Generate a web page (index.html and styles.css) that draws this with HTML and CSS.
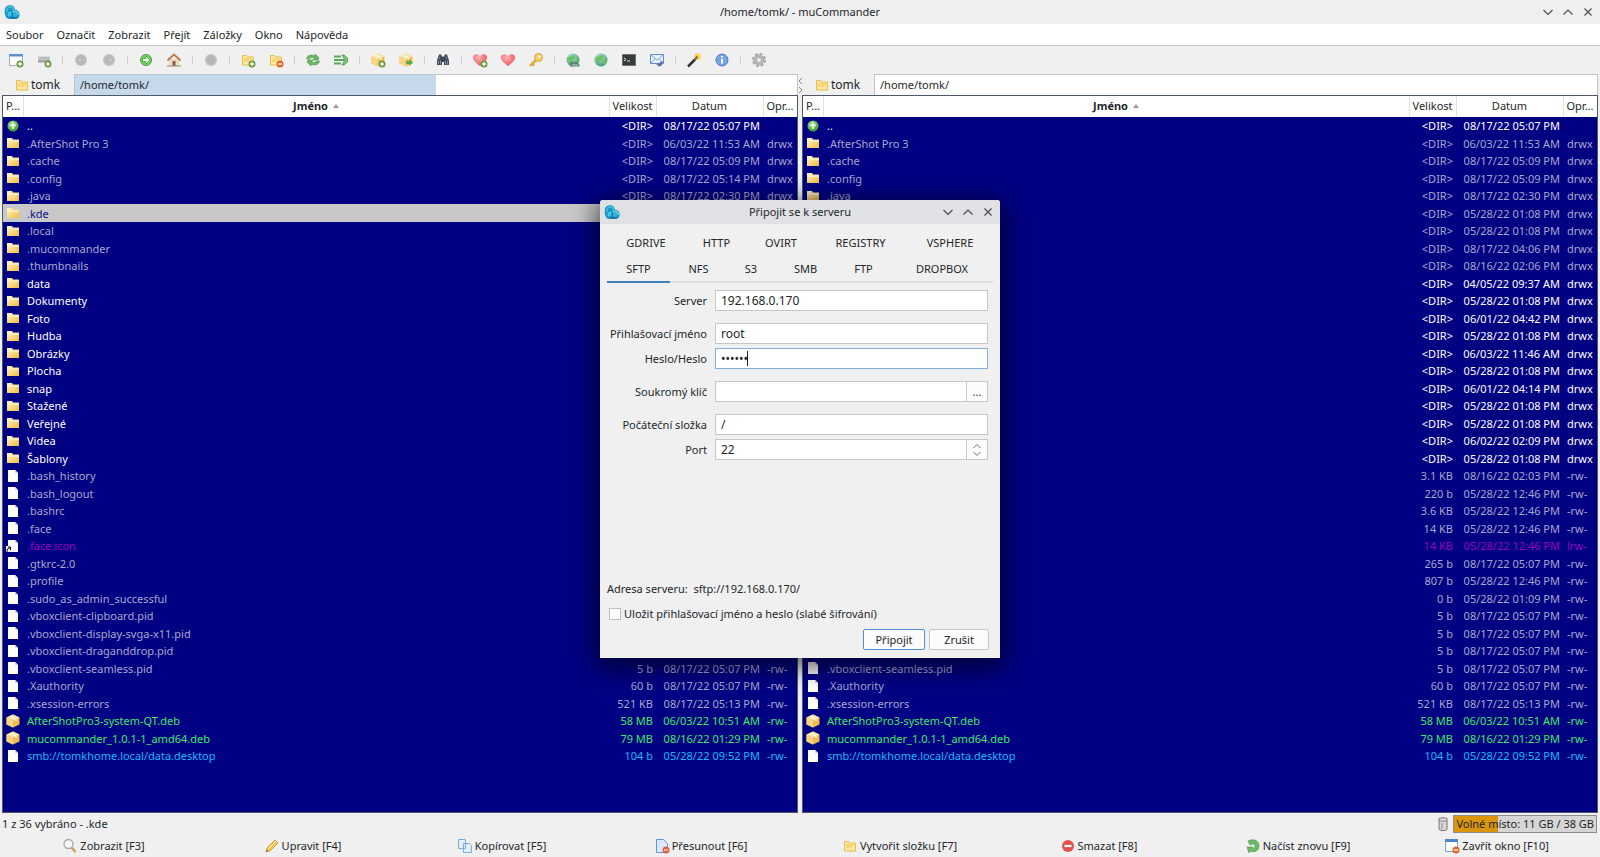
FILE: index.html
```html
<!DOCTYPE html>
<html lang="cs">
<head>
<meta charset="utf-8">
<title>/home/tomk/ - muCommander</title>
<link rel="stylesheet" href="styles.css">
</head>
<body>
<svg class="sprite" aria-hidden="true">
  <defs>
    <linearGradient id="g-folder" x1="0" y1="0" x2="1" y2="1"><stop offset="0" stop-color="#fff6cc"/><stop offset="1" stop-color="#f2bd3e"/></linearGradient>
    <radialGradient id="g-green" cx=".4" cy=".3" r=".7"><stop offset="0" stop-color="#a6e888"/><stop offset="1" stop-color="#3a9c34"/></radialGradient>
    <radialGradient id="g-grey" cx=".5" cy=".5" r=".6"><stop offset="0" stop-color="#a8a8a8"/><stop offset="1" stop-color="#c8c8c8"/></radialGradient>
    <radialGradient id="g-heart" cx=".4" cy=".3" r=".7"><stop offset="0" stop-color="#ffb3b3"/><stop offset="1" stop-color="#e85560"/></radialGradient>
    <radialGradient id="g-globe" cx=".4" cy=".3" r=".7"><stop offset="0" stop-color="#b4e8d0"/><stop offset="1" stop-color="#3a9c7c"/></radialGradient>
  </defs>
  <symbol id="plus" viewBox="0 0 16 16"><circle cx="12" cy="12" r="3.500" fill="#6a9c3c"/><path d="M10 12h4M12 10v4" stroke="#fff" stroke-width="1.300"/></symbol>
  <symbol id="minus" viewBox="0 0 16 16"><circle cx="12" cy="12" r="3.500" fill="#e06a28"/><path d="M10 12h4" stroke="#fff" stroke-width="1.300"/></symbol>
  <symbol id="app" viewBox="0 0 16 16"><path d="M2 13C0 9 0 3 4 1.500c3-1 7 0 7 4.500 3 0 5 2 4.500 5.500-.5 3.500-3.500 3.500-5.500 3.500-3-1-6 1-8-2z" fill="#1a94c4"/><path d="M2.500 8c0-3 2-6 5-5 2 .5 2 2 2 4" stroke="#48c0e4" stroke-width="1.500" fill="none"/><path d="M9 8c3-1.500 5 0 5 3" stroke="#6cdcf6" stroke-width="1.500" fill="none"/><circle cx="6" cy="10" r="2.600" fill="#3cc4ea"/><circle cx="11" cy="11" r="2" fill="#34b4e0"/><path d="M5 14h8M8 9v4" stroke="#0a6490"/></symbol>
  <symbol id="window-new" viewBox="0 0 16 16"><path d="M1.500 2.500h13v11h-13z" fill="#fff" stroke="#9cb0c8"/><path d="M1 2h14v2.500H1z" fill="#5b8fd0"/><use href="#plus"/></symbol>
  <symbol id="drive-new" viewBox="0 0 16 16"><path d="M2 4.500h12v6H2z" fill="#c4c4c4"/><path d="M2 8h12v2.500H2z" fill="#a4a4a4"/><path d="M4 6h8" stroke="#b0b0b0"/><use href="#plus"/></symbol>
  <symbol id="back" viewBox="0 0 16 16"><circle cx="8" cy="8" r="6" fill="url(#g-grey)"/><path d="M8.500 5l-3 3 3 3M6 8h5" stroke="#cfcfcf" fill="none"/></symbol>
  <symbol id="forward" viewBox="0 0 16 16"><circle cx="8" cy="8" r="6" fill="url(#g-grey)"/><path d="M7.500 5l3 3-3 3M5 8h5" stroke="#cfcfcf" fill="none"/></symbol>
  <symbol id="go" viewBox="0 0 16 16"><circle cx="8" cy="8" r="5.500" fill="#7ccf68" stroke="#48a43c"/><path d="M8 4l4 4-4 4V9.500H4.500v-3H8z" fill="#effbe8" stroke="#3c9434" stroke-width=".7"/></symbol>
  <symbol id="parent" viewBox="0 0 16 16"><circle cx="8" cy="8" r="5.500" fill="url(#g-green)"/><path d="M8 11V5M5.500 8L8 5.500 10.500 8" stroke="#fff" stroke-width="1.500" fill="none"/></symbol>
  <symbol id="home" viewBox="0 0 16 16"><path d="M3 7h10v7H3z" fill="#ecdcc4"/><path d="M1.500 8.500L8 2.500l6.500 6" stroke="#bc7c50" stroke-width="2" fill="none"/><path d="M6.500 9h3v5h-3z" fill="#8c6048"/><path d="M1 14h14" stroke="#8c8c64"/></symbol>
  <symbol id="stop" viewBox="0 0 16 16"><circle cx="8" cy="8" r="6" fill="url(#g-grey)"/><path d="M6 6l4 4M10 6l-4 4" stroke="#bcbcbc"/></symbol>
  <symbol id="folder-y" viewBox="0 0 16 16"><path d="M2.500 3.500h4l1 1.500h6v8h-11z" fill="#ffe9a0" stroke="#e8bc50"/><path d="M4 7h8M4 9h6" stroke="#edc458"/></symbol>
  <symbol id="folder-add" viewBox="0 0 16 16"><use href="#folder-y"/><use href="#plus"/></symbol>
  <symbol id="folder-del" viewBox="0 0 16 16"><use href="#folder-y"/><use href="#minus"/></symbol>
  <symbol id="swap" viewBox="0 0 16 16"><path d="M1.500 7C2 3.500 6 2 10 4V2l4 4-1 2H8l1.500-1.500C7 5 5 5.500 4.500 7zM14.500 9c-.5 3.500-4.500 5-8.500 3v2l-4-4 1-2h5L6.500 9.500c2.500 1.500 4.500 1 5-.5z" fill="#6ab866" stroke="#4a964c" stroke-width=".6"/></symbol>
  <symbol id="same" viewBox="0 0 16 16"><path d="M1 4.500h7M1 8h10M1 11.500h7" stroke="#58a85a" stroke-width="2"/><path d="M9 3h2l3.500 3v4L11 13H9l3-5z" fill="#7cc278" stroke="#46924c" stroke-width=".8"/></symbol>
  <symbol id="box" viewBox="0 0 16 16"><path d="M8 1.500l6.500 3v7l-6.500 3-6.500-3v-7z" fill="#f3bd52"/><path d="M8 1.500l6.500 3-6.500 3-6.500-3z" fill="#fbe6ae"/><path d="M8 7.500v7l-6.500-3v-7z" fill="#f8d488"/><path d="M5 3l6 3v2" stroke="#fff" fill="none"/></symbol>
  <symbol id="pack" viewBox="0 0 16 16"><use href="#box"/><use href="#plus"/></symbol>
  <symbol id="unpack" viewBox="0 0 16 16"><use href="#box"/><path d="M8 9h3V7l4 3.500-4 3.500v-2H8z" fill="#60a84c"/></symbol>
  <symbol id="find" viewBox="0 0 16 16"><path d="M4 2.500h2.500v2h3v-2H12l2 6V13H9v-3H7v3H2V8.500z" fill="#3c4654"/><path d="M3.500 8.500v4M5.500 8.500v4M10.500 8.500v4M12.500 8.500v4M4.500 5v2M11.500 5v2" stroke="#8c9cac" stroke-width=".9"/></symbol>
  <symbol id="heart" viewBox="0 0 16 16"><path d="M8 14C4 11 1 8.500 1 5.500 1 2 6 1 8 4.500 10 1 15 2 15 5.500 15 8.500 12 11 8 14z" fill="url(#g-heart)"/></symbol>
  <symbol id="heart-add" viewBox="0 0 16 16"><use href="#heart"/><use href="#plus"/></symbol>
  <symbol id="key" viewBox="0 0 16 16"><path d="M8.500 7.500L2 14M4 11.500l2 2" stroke="#e2a642" stroke-width="2.500"/><circle cx="10.500" cy="5.500" r="4" fill="#f7cd66" stroke="#dda440"/><circle cx="11.500" cy="4.500" r="1.200" fill="#fff"/></symbol>
  <symbol id="globe" viewBox="0 0 16 16"><circle cx="8" cy="8" r="6.500" fill="url(#g-globe)"/><path d="M3 6c2-3 4 0 4-3l3 1-1 4-3 1-1 3zM10 9l3-2 1 3-3 3z" fill="#6cc05c"/></symbol>
  <symbol id="globe-link" viewBox="0 0 16 16"><use href="#globe"/><path d="M5 14.500V11l2-2 2 2 2-2 3.500 3.500v2z" fill="#5c8478"/><path d="M7 13h6" stroke="#b4d4c4"/></symbol>
  <symbol id="terminal" viewBox="0 0 16 16"><path d="M1.500 2.500h13v11h-13z" fill="#363b3b" stroke="#6c7070"/><path d="M3 6l2 1.500L3 9M6 9h3" stroke="#e4e4e4" fill="none"/></symbol>
  <symbol id="mail" viewBox="0 0 16 16"><path d="M1.500 2.500h13v9h-13z" fill="#e8f1fc" stroke="#5b8fdb"/><path d="M2 3l6 5 6-5M2 11l4-4M14 11l-4-4" stroke="#7da8e2" fill="none"/><path d="M7 12l3 2.500c2 0 4-2 4-5h-2l-2.500 2z" fill="#62799a"/></symbol>
  <symbol id="wand" viewBox="0 0 16 16"><circle cx="11.500" cy="4.500" r="3.500" fill="#fbd468"/><path d="M2 14.500l7-7" stroke="#333" stroke-width="2.500"/><path d="M8.500 8l3-3.500" stroke="#7c6838" stroke-width="2"/></symbol>
  <symbol id="info" viewBox="0 0 16 16"><circle cx="8" cy="8" r="6" fill="#76a9df" stroke="#4778b8"/><path d="M8 7v4.500M8 4v1.500" stroke="#fff" stroke-width="2"/></symbol>
  <symbol id="gear" viewBox="0 0 16 16"><circle cx="8" cy="8" r="6" fill="none" stroke="#a0a0a0" stroke-width="2" stroke-dasharray="2.700 2"/><circle cx="8" cy="8" r="3.700" fill="none" stroke="#b4b4b4" stroke-width="3.600"/></symbol>
  <symbol id="folder" viewBox="0 0 16 16"><path d="M2 3h5l1 1.500h6V13H2z" fill="url(#g-folder)"/><path d="M2 6h12" stroke="#fff8dc"/></symbol>
  <symbol id="file" viewBox="0 0 16 16"><path d="M3 2h7l3 3v9H3z" fill="#fff"/><path d="M10 2v3h3" fill="#d4d8e4"/></symbol>
  <symbol id="file-link" viewBox="0 0 16 16"><use href="#file"/><path d="M1 8h5v6H1z" fill="#e8ecf0"/><path d="M2 14c0-3 1-4 3-4M3 9h2.500v3" stroke="#111" fill="none"/></symbol>
  <symbol id="magnifier" viewBox="0 0 16 16"><path d="M9.500 9.500l4 4.500" stroke="#d49a60" stroke-width="2.500"/><circle cx="6.500" cy="6" r="4.500" fill="#f4f6f8" stroke="#a8a8a8" stroke-width="1.300"/></symbol>
  <symbol id="pencil" viewBox="0 0 16 16"><path d="M2 14l1-4 8-8 3 3-8 8z" fill="#f5c656" stroke="#cf8f2c" stroke-width=".8"/><path d="M4 11l8-8" stroke="#fff2b8"/><path d="M2 14l1-2 1 1z" fill="#444"/></symbol>
  <symbol id="copy" viewBox="0 0 16 16"><path d="M1.500 1.500h7v9h-7zM6.500 5.500h6l2 2v7h-8z" fill="#e2effc" stroke="#7baee0"/></symbol>
  <symbol id="move" viewBox="0 0 16 16"><path d="M2.500 1.500h7l4 4v9h-11z" fill="#d9eafc" stroke="#5c98dc"/><circle cx="12" cy="12" r="3.500" fill="#dd6040"/><path d="M10 12h4" stroke="#fff"/></symbol>
  <symbol id="delete" viewBox="0 0 16 16"><circle cx="8" cy="8" r="6" fill="#e2524a"/><path d="M4.500 8h7" stroke="#fff" stroke-width="2.200"/></symbol>
  <symbol id="reload" viewBox="0 0 16 16"><path d="M3 3c6-3 11 0 11 5s-5 7-9 5l-1 2-2-6 6 0-1 2c2 0 3-1 3-3s-3-3-5-1z" fill="#6abc64" stroke="#43924a" stroke-width=".6"/></symbol>
  <symbol id="window-close" viewBox="0 0 16 16"><path d="M1.500 1.500h12v12h-12z" fill="#fff" stroke="#7aa4d8"/><path d="M1 1h13v3H1z" fill="#4c88d0"/><use href="#minus"/></symbol>
  <symbol id="trash" viewBox="0 0 16 16"><path d="M4 2.500c2-1 6-1 8 0v11c-2 1.500-6 1.500-8 0z" fill="#d8d8d8" stroke="#747474"/><path d="M4 4.500c2 1 6 1 8 0M7 7v6" stroke="#888" fill="none"/></symbol>
  <symbol id="win-min" viewBox="0 0 16 16"><path d="M3.500 6L8 10.500 12.500 6" stroke="#4a4e52" stroke-width="1.200" fill="none"/></symbol>
  <symbol id="win-max" viewBox="0 0 16 16"><path d="M3.500 10.500L8 6l4.500 4.500" stroke="#4a4e52" stroke-width="1.200" fill="none"/></symbol>
  <symbol id="win-x" viewBox="0 0 16 16"><path d="M4.500 4.500l7 7M11.500 4.500l-7 7" stroke="#4a4e52" stroke-width="1.200"/></symbol>
</svg>

<header class="titlebar">
  <svg class="icon"><use href="#app"/></svg>
  <h1 class="title">/home/tomk/ - muCommander</h1>
  <div class="window-buttons">
    <button aria-label="Minimalizovat"><svg class="icon"><use href="#win-min"/></svg></button>
    <button aria-label="Maximalizovat"><svg class="icon"><use href="#win-max"/></svg></button>
    <button aria-label="Zavřít"><svg class="icon"><use href="#win-x"/></svg></button>
  </div>
</header>
<nav class="menubar">
  <button>Soubor</button><button>Označit</button><button>Zobrazit</button><button>Přejít</button><button>Záložky</button><button>Okno</button><button>Nápověda</button>
</nav>
<div class="toolbar" role="toolbar" aria-label="Nástroje"></div>

<main class="workspace">
  <section class="panel">
    <div class="location">
      <button class="drive"><svg class="icon"><use href="#folder-y"/></svg>tomk</button>
      <input class="path loading" aria-label="Cesta vlevo" value="/home/tomk/">
    </div>
    <div class="listing" data-side="left"></div>
  </section>
  <div class="splitter"><svg viewBox="0 0 4 20"><path d="M4 4L1 7l3 3M1 13l3 3-3 3" fill="none" stroke="#888"/></svg></div>
  <section class="panel">
    <div class="location">
      <button class="drive"><svg class="icon"><use href="#folder-y"/></svg>tomk</button>
      <input class="path" aria-label="Cesta vpravo" value="/home/tomk/">
    </div>
    <div class="listing" data-side="right"></div>
  </section>
</main>

<div class="statusbar">
  <span>1 z 36 vybráno - .kde</span>
  <svg class="icon"><use href="#trash"/></svg>
  <span class="volume">Volné místo: 11 GB / 38 GB</span>
</div>
<footer class="commands">
  <button><svg class="icon"><use href="#magnifier"/></svg>Zobrazit [F3]</button>
  <button><svg class="icon"><use href="#pencil"/></svg>Upravit [F4]</button>
  <button><svg class="icon"><use href="#copy"/></svg>Kopírovat [F5]</button>
  <button><svg class="icon"><use href="#move"/></svg>Přesunout [F6]</button>
  <button><svg class="icon"><use href="#folder-y"/></svg>Vytvořit složku [F7]</button>
  <button><svg class="icon"><use href="#delete"/></svg>Smazat [F8]</button>
  <button><svg class="icon"><use href="#reload"/></svg>Načíst znovu [F9]</button>
  <button><svg class="icon"><use href="#window-close"/></svg>Zavřít okno [F10]</button>
</footer>

<div class="dialog" role="dialog" aria-labelledby="dialog-title">
  <div class="titlebar dialog-titlebar">
    <svg class="icon"><use href="#app"/></svg>
    <h2 class="title" id="dialog-title">Připojit se k serveru</h2>
    <div class="window-buttons">
      <button aria-label="Minimalizovat"><svg class="icon"><use href="#win-min"/></svg></button>
      <button aria-label="Maximalizovat"><svg class="icon"><use href="#win-max"/></svg></button>
      <button aria-label="Zavřít"><svg class="icon"><use href="#win-x"/></svg></button>
    </div>
  </div>
  <form class="dialog-body">
    <div class="tabs" role="tablist">
      <div class="tab-row upper">
        <button type="button" role="tab">GDRIVE</button><button type="button" role="tab">HTTP</button><button type="button" role="tab">OVIRT</button><button type="button" role="tab">REGISTRY</button><button type="button" role="tab">VSPHERE</button>
      </div>
      <div class="tab-row lower">
        <button type="button" role="tab" aria-selected="true">SFTP</button><button type="button" role="tab">NFS</button><button type="button" role="tab">S3</button><button type="button" role="tab">SMB</button><button type="button" role="tab">FTP</button><button type="button" role="tab">DROPBOX</button>
      </div>
    </div>
    <div class="fields">
      <div class="field spaced"><label for="server">Server</label><input id="server" value="192.168.0.170"></div>
      <div class="field"><label for="login">Přihlašovací jméno</label><input id="login" value="root"></div>
      <div class="field spaced"><label for="password">Heslo/Heslo</label><div class="focused"><input id="password" type="password" value="secret"></div></div>
      <div class="field spaced"><label for="key-file">Soukromý klíč</label><div class="joined"><input id="key-file"><button type="button" aria-label="Vybrat soubor">...</button></div></div>
      <div class="field"><label for="start-folder">Počáteční složka</label><input id="start-folder" value="/"></div>
      <div class="field"><label for="port">Port</label><div class="joined"><input id="port" inputmode="numeric" value="22"><button type="button" aria-label="Změnit port"><svg class="icon" viewBox="0 0 16 16"><path d="M4.500 6L8 2.500 11.500 6M4.500 10L8 13.500 11.500 10" fill="none" stroke="#777"/></svg></button></div></div>
    </div>
    <p class="address">Adresa serveru:&nbsp; <output>sftp://192.168.0.170/</output></p>
    <label class="remember"><input type="checkbox">Uložit přihlašovací jméno a heslo (slabé šifrování)</label>
    <div class="actions"><button class="primary">Připojit</button><button type="button">Zrušit</button></div>
  </form>
</div>
<script src="app.js"></script>
</body>
</html>
```

FILE: styles.css
```css
* { box-sizing: border-box; }

body {
  margin: 0;
  min-height: 100vh;
  display: flex;
  flex-direction: column;
  position: relative;
  background: #f0f0f0;
  color: #232629;
  font: 11px/16px "Noto Sans", "Open Sans", sans-serif;
}

button, input { font: inherit; color: inherit; }
button { background: none; border: 0; padding: 0; }
.sprite { position: absolute; width: 0; height: 0; }
.icon { width: 16px; height: 16px; flex: none; display: block; }

.titlebar {
  height: 24px;
  display: grid;
  grid-template-columns: 60px 1fr 60px;
  align-items: center;
  padding: 0 4px;
  background: #efefef;
}
.title { margin: 0; font-size: 11px; font-weight: 400; text-align: center; }
.window-buttons { display: flex; justify-content: flex-end; gap: 4px; }

.menubar {
  height: 22px;
  display: flex;
  gap: 13px;
  padding: 0 6px;
  background: #fff;
  border-bottom: 1px solid #c4c4c4;
}

.toolbar { height: 28px; display: flex; align-items: center; padding: 0 2px; }
.toolbar button { width: 28px; display: flex; justify-content: center; }
.toolbar .sep { width: 1px; height: 8px; margin: 0 4px; background: #cdd0d2; }

.workspace {
  flex: 1;
  display: grid;
  grid-template-columns: minmax(0, 1fr) 4px minmax(0, 1fr);
  padding: 0 2px;
}
.splitter svg { width: 4px; height: 20px; display: block; }
.panel { display: flex; flex-direction: column; }
.location { height: 21px; display: flex; }
.drive { width: 72px; padding-right: 2px; display: flex; align-items: center; justify-content: center; gap: 1px; font-size: 12px; }
.path {
  flex: 1;
  min-width: 0;
  padding: 0 5px;
  border: 1px solid #c0c4c8;
  border-width: 1px 1px 0;
  background: #fff;
  outline: none;
}
.loading { background: linear-gradient(to right, #c6d9ea 50%, #fff 50%); }

.listing {
  flex: 1;
  background: #000083;
  border: 1px solid #4c5868;
}
.files { width: 100%; table-layout: fixed; border-collapse: collapse; }
.files th {
  height: 21px;
  padding: 0 3px 1px;
  background: #fff;
  border-right: 1px solid #e2e2e2;
  font-weight: 400;
  white-space: nowrap;
}
.files th:last-child { border-right: 0; }
.files th.sorted { font-weight: 700; }
.files th.sorted::after {
  content: "";
  display: inline-block;
  margin: 0 0 2px 5px;
  border: 3px solid transparent;
  border-top: 0;
  border-bottom: 4px solid #999;
}
.col-icon { width: 20px; }
.col-size { width: 47px; }
.col-date { width: 107px; }
.col-perm { width: 34px; }
.files td { padding: 0 3px; line-height: 17px; height: 17px; white-space: nowrap; text-align: right; }
.files tr:nth-child(even) td { height: 18px; }
.files td:first-child { padding: 0 2px; }
.files td:nth-child(2), .files td:last-child { text-align: left; padding-left: 4px; }
.files th:first-child, .files th:last-child { text-align: left; }
.plain { color: #fff; }
.hidden { color: #a8a8cc; }
.link { color: #9c00bc; }
.archive { color: #3ce868; }
.remote { color: #10bcf8; }
.selected { background: #c8c8c8; color: #10108c; }

.statusbar {
  height: 22px;
  display: flex;
  align-items: center;
  gap: 2px;
  padding: 0 3px 0 2px;
}
.statusbar .icon { margin-left: auto; }
.volume {
  padding: 0 2px;
  border: 1px solid #8c8c8c;
  background: linear-gradient(to right, #d9960c 31%, #d6d6d6 31%);
}
.commands { height: 22px; display: grid; grid-template-columns: repeat(8, 1fr); padding: 0 4px; }
.commands button { display: flex; align-items: center; justify-content: center; gap: 2px; }

.dialog {
  position: absolute;
  top: 200px;
  left: 50%;
  width: 400px;
  margin-left: -200px;
  display: flex;
  flex-direction: column;
  background: #f0f0f0;
  border-radius: 3px 3px 0 0;
  box-shadow: 0 5px 24px 4px rgba(0, 0, 10, .65);
}
.dialog-titlebar { background: #dfe1e4; border-radius: 3px 3px 0 0; }
.dialog-body { padding: 7px 7px 8px; display: flex; flex-direction: column; }
.tab-row { display: grid; }
.tab-row button { height: 26px; border-bottom: 2px solid transparent; }
.upper { grid-template-columns: 78fr 63fr 66fr 93fr 86fr; }
.lower { grid-template-columns: 63fr 57fr 48fr 61fr 55fr 102fr; }
.lower button { border-bottom-color: #dcdee0; }
.lower button[aria-selected] { border-bottom-color: #4080bc; }
.fields { padding: 7px 5px 0 0; display: flex; flex-direction: column; gap: 4px; }
.field { display: grid; grid-template-columns: 100px 1fr; column-gap: 8px; align-items: center; }
.spaced { margin-bottom: 8px; }
.field label { text-align: right; white-space: nowrap; }
.field input {
  width: 100%;
  min-width: 0;
  height: 21px;
  padding: 0 5px;
  border: 1px solid #c4c6c8;
  background: #fff;
  outline: none;
  font-size: 12px;
}
.focused { position: relative; }
.field .focused input { border-color: #7fb0dc; }
.focused::after { content: ""; position: absolute; left: 32px; top: 3px; width: 1px; height: 15px; background: #222; }
.joined { display: flex; }
.joined button {
  width: 21px;
  flex: none;
  display: flex;
  align-items: center;
  justify-content: center;
  background: #fcfcfc;
  border: 1px solid #c4c6c8;
  border-left: 0;
}
.address { margin: 121px 0 9px; }
.remember { display: flex; align-items: center; gap: 3px; padding-left: 2px; white-space: nowrap; }
.remember input { appearance: none; width: 12px; height: 12px; margin: 0; border: 1px solid #bcbec0; background: #fff; }
.actions { display: flex; justify-content: flex-end; gap: 4px; padding: 7px 4px 0 0; }
.actions button { width: 60px; height: 21px; background: #fcfcfc; border: 1px solid #c4c6c8; border-radius: 2px; }
.actions .primary { width: 62px; border-color: #4a90d9; }
```

FILE: app.js
```js
const tools = [
  ["window-new", "drive-new"], ["back", "forward"], ["go", "home"], ["stop"],
  ["folder-add", "folder-del"], ["swap", "same"], ["pack", "unpack"], ["find"],
  ["heart-add", "heart", "key"], ["globe-link", "globe", "terminal", "mail"],
  ["wand", "info"], ["gear"],
];
const icon = name => `<svg class="icon"><use href="#${name}"/></svg>`;

document.querySelector(".toolbar").innerHTML = tools
  .map(group => group.map(name => `<button aria-label="${name}">${icon(name)}</button>`).join(""))
  .join('<span class="sep"></span>');

// name, size, date, permissions, colour class, icon
const dir = (name, date, kind) => [name, "&lt;DIR&gt;", date, "drwx", kind, "folder"];
const file = (name, size, date, kind = "hidden", pic = "file", perm = "-rw-") => [name, size, date, perm, kind, pic];

const files = [
  ["..", "&lt;DIR&gt;", "08/17/22 05:07 PM", "", "plain", "parent"],
  dir(".AfterShot Pro 3", "06/03/22 11:53 AM", "hidden"),
  dir(".cache", "08/17/22 05:09 PM", "hidden"),
  dir(".config", "08/17/22 05:09 PM", "hidden"),
  dir(".java", "08/17/22 02:30 PM", "hidden"),
  dir(".kde", "05/28/22 01:08 PM", "hidden"),
  dir(".local", "05/28/22 01:08 PM", "hidden"),
  dir(".mucommander", "08/17/22 04:06 PM", "hidden"),
  dir(".thumbnails", "08/16/22 02:06 PM", "hidden"),
  dir("data", "04/05/22 09:37 AM", "plain"),
  dir("Dokumenty", "05/28/22 01:08 PM", "plain"),
  dir("Foto", "06/01/22 04:42 PM", "plain"),
  dir("Hudba", "05/28/22 01:08 PM", "plain"),
  dir("Obrázky", "06/03/22 11:46 AM", "plain"),
  dir("Plocha", "05/28/22 01:08 PM", "plain"),
  dir("snap", "06/01/22 04:14 PM", "plain"),
  dir("Stažené", "05/28/22 01:08 PM", "plain"),
  dir("Veřejné", "05/28/22 01:08 PM", "plain"),
  dir("Videa", "06/02/22 02:09 PM", "plain"),
  dir("Šablony", "05/28/22 01:08 PM", "plain"),
  file(".bash_history", "3.1 KB", "08/16/22 02:03 PM"),
  file(".bash_logout", "220 b", "05/28/22 12:46 PM"),
  file(".bashrc", "3.6 KB", "05/28/22 12:46 PM"),
  file(".face", "14 KB", "05/28/22 12:46 PM"),
  file(".face.icon", "14 KB", "05/28/22 12:46 PM", "link", "file-link", "lrw-"),
  file(".gtkrc-2.0", "265 b", "08/17/22 05:07 PM"),
  file(".profile", "807 b", "05/28/22 12:46 PM"),
  file(".sudo_as_admin_successful", "0 b", "05/28/22 01:09 PM"),
  file(".vboxclient-clipboard.pid", "5 b", "08/17/22 05:07 PM"),
  file(".vboxclient-display-svga-x11.pid", "5 b", "08/17/22 05:07 PM"),
  file(".vboxclient-draganddrop.pid", "5 b", "08/17/22 05:07 PM"),
  file(".vboxclient-seamless.pid", "5 b", "08/17/22 05:07 PM"),
  file(".Xauthority", "60 b", "08/17/22 05:07 PM"),
  file(".xsession-errors", "521 KB", "08/17/22 05:13 PM"),
  file("AfterShotPro3-system-QT.deb", "58 MB", "06/03/22 10:51 AM", "archive", "box"),
  file("mucommander_1.0.1-1_amd64.deb", "79 MB", "08/16/22 01:29 PM", "archive", "box"),
  file("smb://tomkhome.local/data.desktop", "104 b", "05/28/22 09:52 PM", "remote"),
];

document.querySelectorAll(".listing").forEach(listing => {
  const left = listing.dataset.side === "left";
  const rows = files.map(([name, size, date, perm, kind, pic]) => {
    const shownDate = left && name === ".config" ? "08/17/22 05:14 PM" : date;
    const shownKind = left && name === ".kde" ? "selected" : kind;
    return `<tr class="${shownKind}"><td>${icon(pic)}</td><td>${name}</td><td>${size}</td><td>${shownDate}</td><td>${perm}</td></tr>`;
  }).join("");
  listing.innerHTML = `<table class="files">
    <colgroup><col class="col-icon"><col><col class="col-size"><col class="col-date"><col class="col-perm"></colgroup>
    <thead><tr><th>P...</th><th class="sorted">Jméno</th><th>Velikost</th><th>Datum</th><th>Opr...</th></tr></thead>
    <tbody>${rows}</tbody></table>`;
});
```
